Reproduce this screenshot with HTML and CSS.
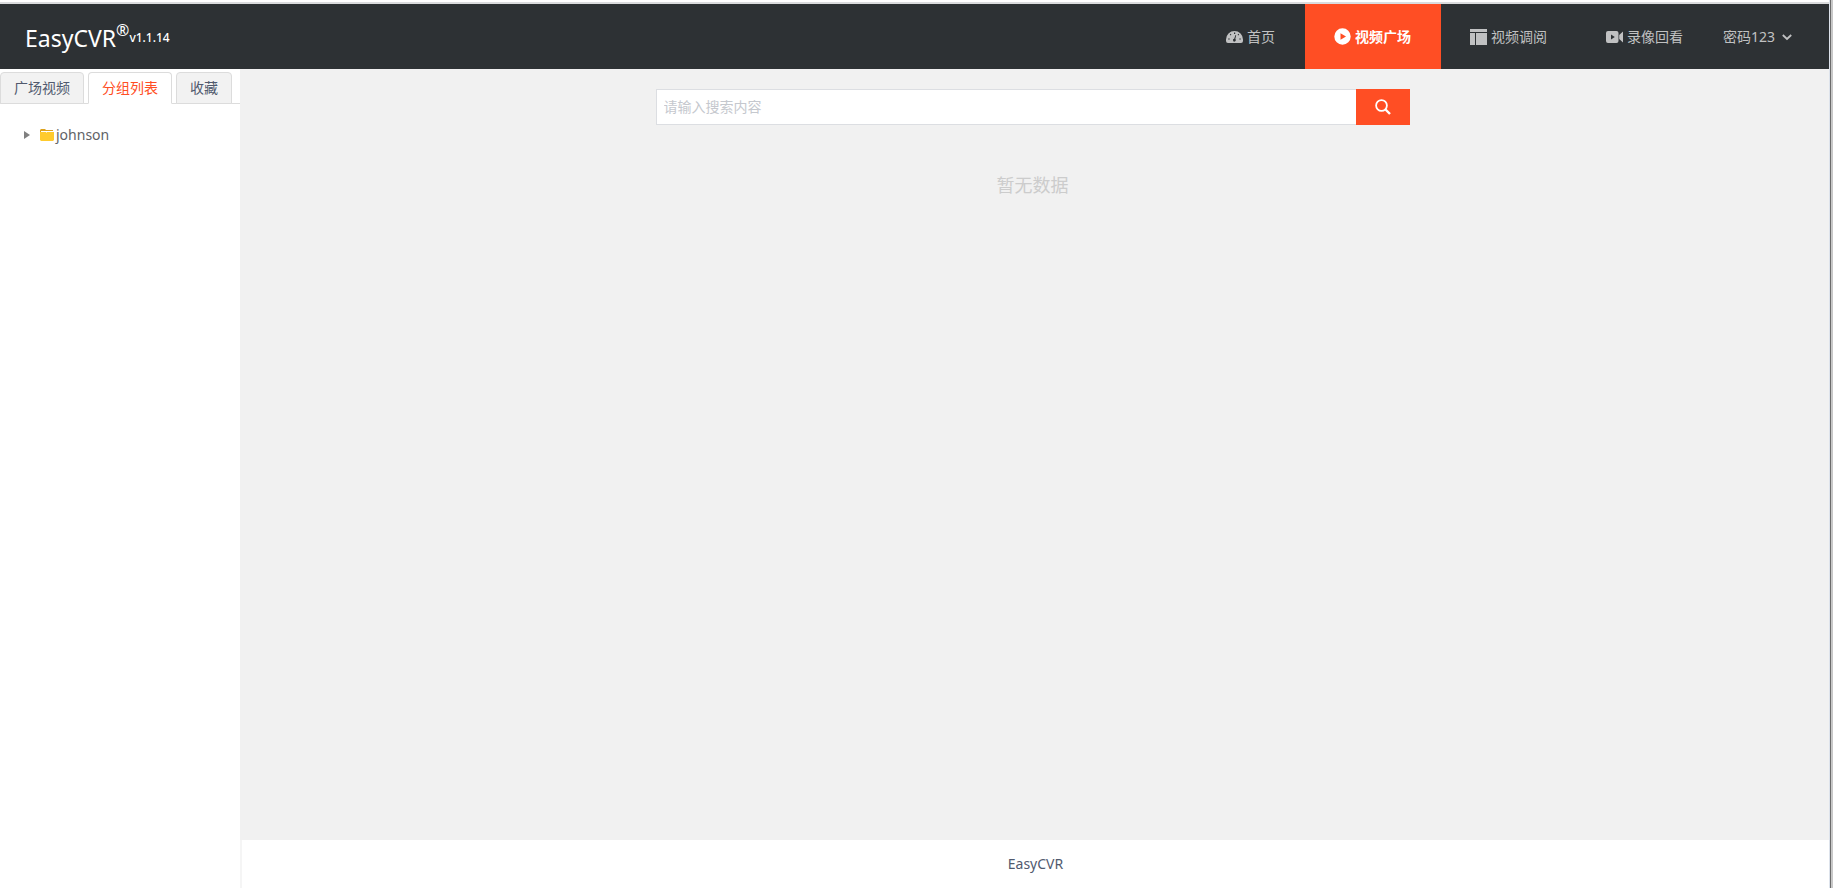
FILE: index.html
```html
<!DOCTYPE html>
<html lang="zh-CN">
<head>
<meta charset="utf-8">
<title>EasyCVR</title>
<link rel="stylesheet" href="styles.css">
</head>
<body>
<div class="window">
  <div class="app">
    <header class="header">
      <h1 class="brand"><span class="brand-name">EasyCVR</span><span class="brand-mark">®</span><span class="brand-version">v1.1.14</span></h1>
      <nav class="nav">
        <a class="nav-item" href="#">
          <svg class="icon" viewBox="0 0 17 17"><path fill="currentColor" fill-rule="evenodd" d="M2 15A2 2 0 0 1 0 13V11.500A8.500 8.500 0 0 1 17 11.500V13A2 2 0 0 1 15 15ZM8 4.500V6H9.200V4.500ZM3.800 6.500L4.700 7.500L5.400 6.800L4.500 5.800ZM2.200 10.400V11.500H3.700V10.400ZM13.300 10.400V11.500H14.800V10.400ZM12.500 5.800L11.600 6.800L12.300 7.500L13.200 6.500ZM9.500 7L8.200 10.700A1.400 1.400 0 1 0 9.300 11L10.200 7.300Z"/></svg>
          <span>首页</span>
        </a>
        <a class="nav-item active" href="#" aria-current="page">
          <svg class="icon" viewBox="0 0 17 17"><path fill="currentColor" fill-rule="evenodd" d="M8.500 .3A8.200 8.200 0 1 1 8.500 16.700A8.200 8.200 0 1 1 8.500 .3ZM6.500 5.200V11.800L12 8.500Z"/></svg>
          <span>视频广场</span>
        </a>
        <a class="nav-item" href="#">
          <svg class="icon" viewBox="0 0 17 17"><path fill="currentColor" d="M0 1H17V4H0ZM0 5H5V17H0ZM6 5H17V17H6Z"/></svg>
          <span>视频调阅</span>
        </a>
        <a class="nav-item" href="#">
          <svg class="icon" viewBox="0 0 17 17"><path fill="currentColor" fill-rule="evenodd" d="M2 3H10.500Q12.500 3 12.500 5V13Q12.500 15 10.500 15H2Q0 15 0 13V5Q0 3 2 3ZM5 6.500V11.500L8.800 9ZM13.200 7L17 3.500V14.500L13.200 11Z"/></svg>
          <span>录像回看</span>
        </a>
        <button class="user" type="button">
          <span>密码123</span>
          <svg class="chevron" viewBox="0 0 10 10"><path fill="none" stroke="currentColor" stroke-width="1.800" d="M.8 3L5 7L9.200 3"/></svg>
        </button>
      </nav>
    </header>
    <div class="body">
      <aside class="sidebar">
        <div class="tabs" role="tablist">
          <button class="tab" type="button" role="tab">广场视频</button>
          <button class="tab selected" type="button" role="tab" aria-selected="true">分组列表</button>
          <button class="tab" type="button" role="tab">收藏</button>
        </div>
        <ul class="tree">
          <li class="tree-node">
            <svg class="caret" viewBox="0 0 6 8"><path fill="#808080" d="M0 0L6 4L0 8Z"/></svg>
            <svg class="folder" viewBox="0 0 14 12"><path fill="#dda21b" d="M1 0H5L6 1H13V5H0V1Z"/><path fill="#fff" d="M1 2H13V4H1Z"/><path fill="#ffcb2d" d="M0 3H6L7 4V3H14V11L13 12H1L0 11Z"/></svg>
            <span>johnson</span>
          </li>
        </ul>
      </aside>
      <div class="main">
        <main class="content">
          <form class="search" role="search">
            <input class="search-input" type="text" placeholder="请输入搜索内容" aria-label="搜索">
            <button class="search-button" type="button" aria-label="搜索">
              <svg class="search-icon" viewBox="0 0 16 16"><g fill="none" stroke="currentColor"><circle cx="6.500" cy="6.500" r="5.400" stroke-width="1.800"/><path stroke-width="2.400" d="M10.500 10.500L15 15"/></g></svg>
            </button>
          </form>
          <p class="empty">暂无数据</p>
        </main>
        <footer class="footer">EasyCVR</footer>
      </div>
    </div>
  </div>
</div>
</body>
</html>
```
FILE: styles.css
```css
* {
  box-sizing: border-box;
}

body {
  margin: 0;
  background: #fff;
  color: #515a6e;
  font-family: "Noto Sans", "Noto Sans CJK SC", sans-serif;
  font-size: 14px;
  line-height: 20px;
}

button,
input {
  margin: 0;
  font: inherit;
}

.window {
  display: flex;
  min-height: 100vh;
  padding-top: 2px;
  background: linear-gradient(to right, #dde3ec 0 1px, #6b6b6b 1px 2px, #c8c8c8 2px) right / 4px 100% no-repeat;
  padding-right: 4px;
}

.app {
  display: flex;
  flex: 1;
  flex-direction: column;
  border-top: 2px solid #dadbdd;
}

.header {
  display: flex;
  align-items: center;
  justify-content: space-between;
  height: 65px;
  padding: 0 27px 0 25px;
  background: #2d3134;
}

.brand {
  display: flex;
  align-items: center;
  margin: 0;
  padding-top: 2px;
  color: #fff;
  font-weight: 400;
}

.brand-name {
  font-size: 23px;
  line-height: 32px;
}

.brand-mark {
  align-self: flex-start;
  font-size: 16px;
  line-height: 16px;
}

.brand-version {
  font-size: 12px;
  font-weight: 500;
}

.nav {
  display: flex;
  align-self: stretch;
}

.nav-item,
.user {
  display: flex;
  align-items: center;
  gap: 4px;
  padding: 0 30px 0 29px;
  color: #c0c1c2;
  text-decoration: none;
}

.nav-item.active {
  background: #ff4e24;
  color: #fff;
  font-weight: 700;
}

.icon {
  width: 17px;
  height: 17px;
}

.user {
  gap: 7px;
  padding: 0 10px;
  border: 0;
  background: none;
}

.chevron {
  width: 10px;
  height: 10px;
}

.body {
  display: flex;
  flex: 1;
}

.sidebar {
  width: 240px;
  padding-top: 3px;
  background: #fff;
}

.tabs {
  display: flex;
  gap: 4px;
  border-bottom: 1px solid #dcdcdc;
}

.tab {
  height: 32px;
  margin-bottom: -1px;
  padding: 0 13px;
  border: 1px solid #dcdcdc;
  border-radius: 4px 4px 0 0;
  background: #f2f2f2;
  color: #515a6e;
}

.tab.selected {
  border-bottom-color: #fff;
  background: #fff;
  color: #ff4e24;
}

.tree {
  margin: 0;
  padding: 21px 24px;
  list-style: none;
}

.tree-node {
  display: flex;
  align-items: center;
  color: #606266;
}

.caret {
  width: 6px;
  height: 8px;
  margin-right: 10px;
}

.folder {
  width: 14px;
  height: 12px;
  margin-right: 2px;
}

.main {
  display: flex;
  flex: 1;
  flex-direction: column;
}

.content {
  flex: 1;
  padding: 20px 4px 0 0;
  background: #f1f1f1;
}

.search {
  display: flex;
  width: 754px;
  max-width: 100%;
  height: 36px;
  margin: 0 auto;
}

.search-input {
  flex: 1;
  min-width: 0;
  padding: 0 7px;
  border: 1px solid #dcdee2;
  border-right: 0;
  background: #fff;
  color: #515a6e;
}

.search-input::placeholder {
  color: #c5c8ce;
}

.search-button {
  display: grid;
  place-items: center;
  width: 54px;
  padding: 0;
  border: 0;
  background: #ff4e24;
  color: #fff;
}

.search-icon {
  width: 16px;
  height: 16px;
}

.empty {
  margin: 46px 0 0;
  color: #ccc;
  font-size: 18px;
  line-height: 28px;
  text-align: center;
}

.footer {
  padding: 14px 0;
  border-left: 2px solid #f5f5f5;
  background: #fff;
  text-align: center;
}
```
